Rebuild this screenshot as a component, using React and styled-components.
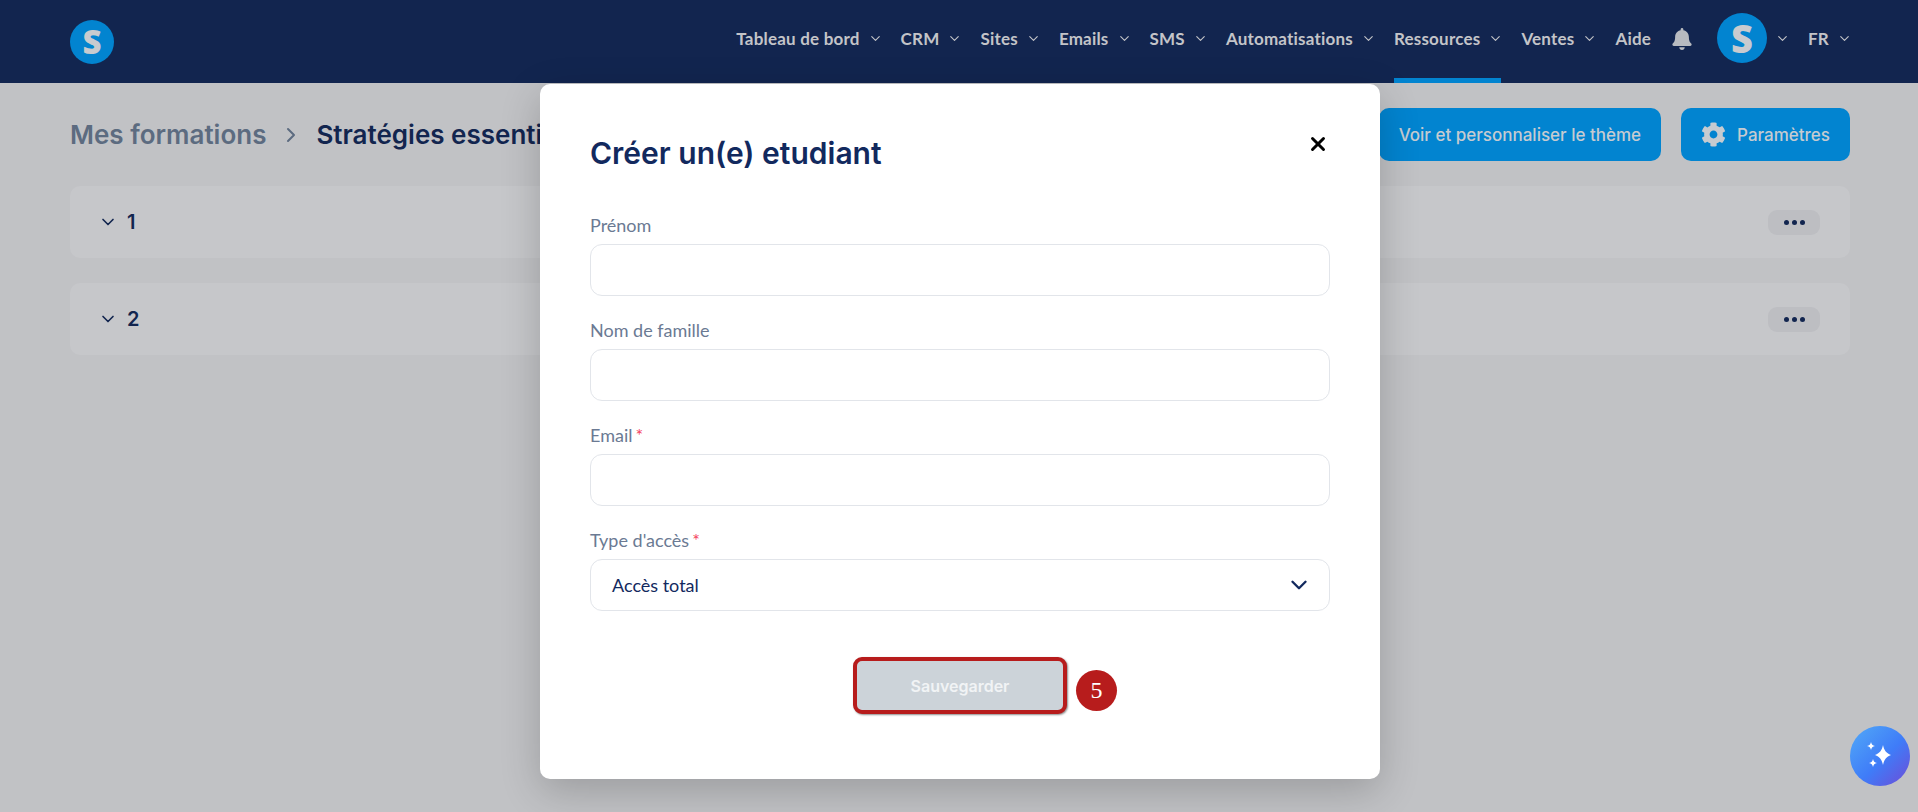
import styled, { createGlobalStyle } from "styled-components";
import { ChevronDown, ChevronRight, X } from "lucide-react";
import { FaBell, FaCog } from "react-icons/fa";

const GlobalStyle = createGlobalStyle`
  html, body {
    margin: 0;
    padding: 0;
    background: #c1c2c5;
  }
  * {
    box-sizing: border-box;
  }
`;

const Page = styled.div`
  position: relative;
  width: 1918px;
  height: 812px;
  overflow: hidden;
  background: #c1c2c5;
  font-family: Inter, "Liberation Sans", sans-serif;
`;

const TopBar = styled.header`
  height: 83px;
  padding: 0 68px 0 70px;
  display: flex;
  align-items: center;
  justify-content: space-between;
  background: #12254f;
`;

const LogoMark = styled.div`
  width: ${(p) => p.$size}px;
  height: ${(p) => p.$size}px;
  border-radius: 50%;
  background: #0284d0;
  color: #c8cbcf;
  display: flex;
  align-items: center;
  justify-content: center;
  font-family: "Open Sans", sans-serif;
  font-weight: 800;
  font-size: ${(p) => Math.round(p.$size * 0.76)}px;
  line-height: 1;
`;

const Nav = styled.nav`
  display: flex;
  align-items: center;
  height: 83px;
  gap: 20px;
`;

const NavItem = styled.div`
  position: relative;
  height: 100%;
  display: flex;
  align-items: center;
  gap: 10px;
  color: #c3c4c8;
  font-family: Lato, sans-serif;
  font-size: 17px;
  font-weight: 700;
  letter-spacing: 0.2px;
  white-space: nowrap;
  padding-bottom: 6px;

  ${(p) =>
    p.$active &&
    `
    &::after {
      content: "";
      position: absolute;
      left: 0;
      right: 0;
      bottom: 0;
      height: 5px;
      background: #0284d0;
    }
  `}
`;

const NavChevron = styled(ChevronDown)`
  width: 15px;
  height: 15px;
  margin: 0 -2px;
  stroke-width: 1.8;
  color: #c3c4c8;
`;

const Bell = styled(FaBell)`
  width: 20px;
  height: 22px;
  color: #b8bbc0;
  margin: 0 5px 6px 1px;
`;

const AvatarGroup = styled.div`
  display: flex;
  align-items: center;
  gap: 10px;
  padding-bottom: 7px;
`;

const Content = styled.main`
  padding: 25px 68px 0 70px;
`;

const PageHead = styled.div`
  height: 53px;
  display: flex;
  align-items: center;
  justify-content: space-between;
`;

const Crumbs = styled.div`
  display: flex;
  align-items: center;
  gap: 13px;
  font-size: 26px;
  font-weight: 600;
  color: #12254f;
  white-space: nowrap;
`;

const CrumbParent = styled.span`
  color: #5c6b80;
`;

const CrumbArrow = styled(ChevronRight)`
  width: 24px;
  height: 24px;
  color: #5c6b80;
  stroke-width: 2;
`;

const Actions = styled.div`
  display: flex;
  gap: 20px;
`;

const ActionButton = styled.button`
  height: 53px;
  padding: 0 20px;
  display: flex;
  align-items: center;
  gap: 11px;
  border: 0;
  border-radius: 10px;
  background: #0284d0;
  color: #c6cbd0;
  font-family: Inter, sans-serif;
  font-size: 17px;
  font-weight: 500;
  white-space: nowrap;

  svg {
    width: 25px;
    height: 25px;
  }
`;

const Sections = styled.div`
  margin-top: 25px;
  display: flex;
  flex-direction: column;
  gap: 25px;
`;

const SectionRow = styled.div`
  height: 72px;
  padding: 0 30px 0 28px;
  display: flex;
  align-items: center;
  justify-content: space-between;
  border-radius: 10px;
  background: #c6c7ca;
`;

const SectionTitle = styled.div`
  display: flex;
  align-items: center;
  gap: 9px;
  color: #12254f;
  font-size: 20px;
  font-weight: 600;
`;

const SectionChevron = styled(ChevronDown)`
  width: 20px;
  height: 20px;
  stroke-width: 2;
`;

const MorePill = styled.div`
  width: 52px;
  height: 25px;
  display: flex;
  align-items: center;
  justify-content: center;
  gap: 3px;
  border-radius: 9px;
  background: #bdbec2;
`;

const Dot = styled.span`
  width: 5px;
  height: 5px;
  border-radius: 50%;
  background: #12254f;
`;

const Modal = styled.section`
  position: absolute;
  top: 84px;
  left: 540px;
  width: 840px;
  height: 695px;
  padding: 50px 50px 0;
  border-radius: 10px;
  background: #fff;
  box-shadow: 0 12px 40px rgba(0, 0, 0, 0.2);
`;

const ModalTitle = styled.h2`
  margin: 0;
  height: 38px;
  color: #12295e;
  font-size: 30px;
  line-height: 38px;
  font-weight: 600;
`;

const CloseButton = styled.button`
  position: absolute;
  top: 49px;
  right: 51px;
  width: 22px;
  height: 22px;
  padding: 0;
  border: 0;
  background: none;
  color: #000;

  svg {
    width: 22px;
    height: 22px;
    stroke-width: 3.2;
  }
`;

const Form = styled.form`
  margin-top: 41px;
  display: flex;
  flex-direction: column;
  gap: 22px;
`;

const Field = styled.div`
  display: flex;
  flex-direction: column;
  gap: 6px;
`;

const Label = styled.label`
  height: 25px;
  line-height: 25px;
  color: #6b7a93;
  font-family: Lato, sans-serif;
  font-size: 18px;
`;

const Required = styled.span`
  margin-left: 3px;
  color: #f43f5e;
`;

const Input = styled.input`
  width: 100%;
  height: 52px;
  border: 1px solid #e2e5ea;
  border-radius: 12px;
  background: #fff;
  outline: none;
`;

const SelectBox = styled.div`
  height: 52px;
  padding: 0 17px 0 21px;
  display: flex;
  align-items: center;
  justify-content: space-between;
  border: 1px solid #e2e5ea;
  border-radius: 12px;
  color: #12295e;
  font-family: Lato, sans-serif;
  font-size: 18px;

  svg {
    width: 26px;
    height: 26px;
    stroke-width: 2.2;
  }
`;

const SaveRow = styled.div`
  position: relative;
  width: 214px;
  margin: 46px auto 0;
`;

const SaveButton = styled.button`
  width: 214px;
  height: 57px;
  border: 4px solid #b71c1c;
  border-radius: 9px;
  background: #ccd3d9;
  color: #f1f3f5;
  font-family: Inter, sans-serif;
  font-size: 16px;
  font-weight: 600;
  box-shadow: 1px 1px 2px rgba(0, 0, 0, 0.45);
`;

const StepBadge = styled.span`
  position: absolute;
  top: 13px;
  left: 223px;
  width: 41px;
  height: 41px;
  display: flex;
  align-items: center;
  justify-content: center;
  border-radius: 50%;
  background: #b71c1c;
  color: #fff;
  font-family: "Liberation Serif", serif;
  font-size: 24px;
`;

const AssistantButton = styled.div`
  position: absolute;
  top: 726px;
  left: 1850px;
  width: 60px;
  height: 60px;
  display: flex;
  align-items: center;
  justify-content: center;
  border-radius: 50%;
  background: linear-gradient(135deg, #52aaf7 0%, #3f7cf8 55%, #6f4bd6 100%);
`;

const navItems = [
  { label: "Tableau de bord", chevron: true },
  { label: "CRM", chevron: true },
  { label: "Sites", chevron: true },
  { label: "Emails", chevron: true },
  { label: "SMS", chevron: true },
  { label: "Automatisations", chevron: true },
  { label: "Ressources", chevron: true, active: true },
  { label: "Ventes", chevron: true },
  { label: "Aide" },
];

const fields = [
  { label: "Prénom" },
  { label: "Nom de famille" },
  { label: "Email", required: true },
];

const Sparkles = () => (
  <svg width="34" height="34" viewBox="0 0 34 34" fill="#fff">
    <path d="M20 6c1 5 3 8 8 10-5 2-7 5-8 10-1-5-3-8-8-10 5-2 7-5 8-10z" />
    <path d="M8 3c.5 2.500 1.500 3.500 4 4-2.500.5-3.500 1.500-4 4-.5-2.500-1.500-3.500-4-4 2.500-.5 3.500-1.500 4-4z" />
    <path d="M10 20c.5 2.500 1.500 3.500 4 4-2.500.5-3.500 1.500-4 4-.5-2.500-1.500-3.500-4-4 2.500-.5 3.500-1.500 4-4z" />
  </svg>
);

export default function App() {
  return (
    <Page>
      <GlobalStyle />
      <TopBar>
        <LogoMark $size={44}>S</LogoMark>
        <Nav>
          {navItems.map((item) => (
            <NavItem key={item.label} $active={item.active}>
              {item.label}
              {item.chevron && <NavChevron />}
            </NavItem>
          ))}
          <Bell />
          <AvatarGroup>
            <LogoMark $size={50}>S</LogoMark>
            <NavChevron />
          </AvatarGroup>
          <NavItem>
            FR
            <NavChevron />
          </NavItem>
        </Nav>
      </TopBar>

      <Content>
        <PageHead>
          <Crumbs>
            <CrumbParent>Mes formations</CrumbParent>
            <CrumbArrow />
            <span>Stratégies essentielles</span>
          </Crumbs>
          <Actions>
            <ActionButton>Voir et personnaliser le thème</ActionButton>
            <ActionButton>
              <FaCog />
              Paramètres
            </ActionButton>
          </Actions>
        </PageHead>
        <Sections>
          {["1", "2"].map((n) => (
            <SectionRow key={n}>
              <SectionTitle>
                <SectionChevron />
                {n}
              </SectionTitle>
              <MorePill>
                <Dot />
                <Dot />
                <Dot />
              </MorePill>
            </SectionRow>
          ))}
        </Sections>
      </Content>

      <Modal>
        <ModalTitle>Créer un(e) etudiant</ModalTitle>
        <CloseButton>
          <X />
        </CloseButton>
        <Form>
          {fields.map((f) => (
            <Field key={f.label}>
              <Label>
                {f.label}
                {f.required && <Required>*</Required>}
              </Label>
              <Input />
            </Field>
          ))}
          <Field>
            <Label>
              Type d'accès
              <Required>*</Required>
            </Label>
            <SelectBox>
              Accès total
              <ChevronDown />
            </SelectBox>
          </Field>
        </Form>
        <SaveRow>
          <SaveButton type="button">Sauvegarder</SaveButton>
          <StepBadge>5</StepBadge>
        </SaveRow>
      </Modal>

      <AssistantButton>
        <Sparkles />
      </AssistantButton>
    </Page>
  );
}
